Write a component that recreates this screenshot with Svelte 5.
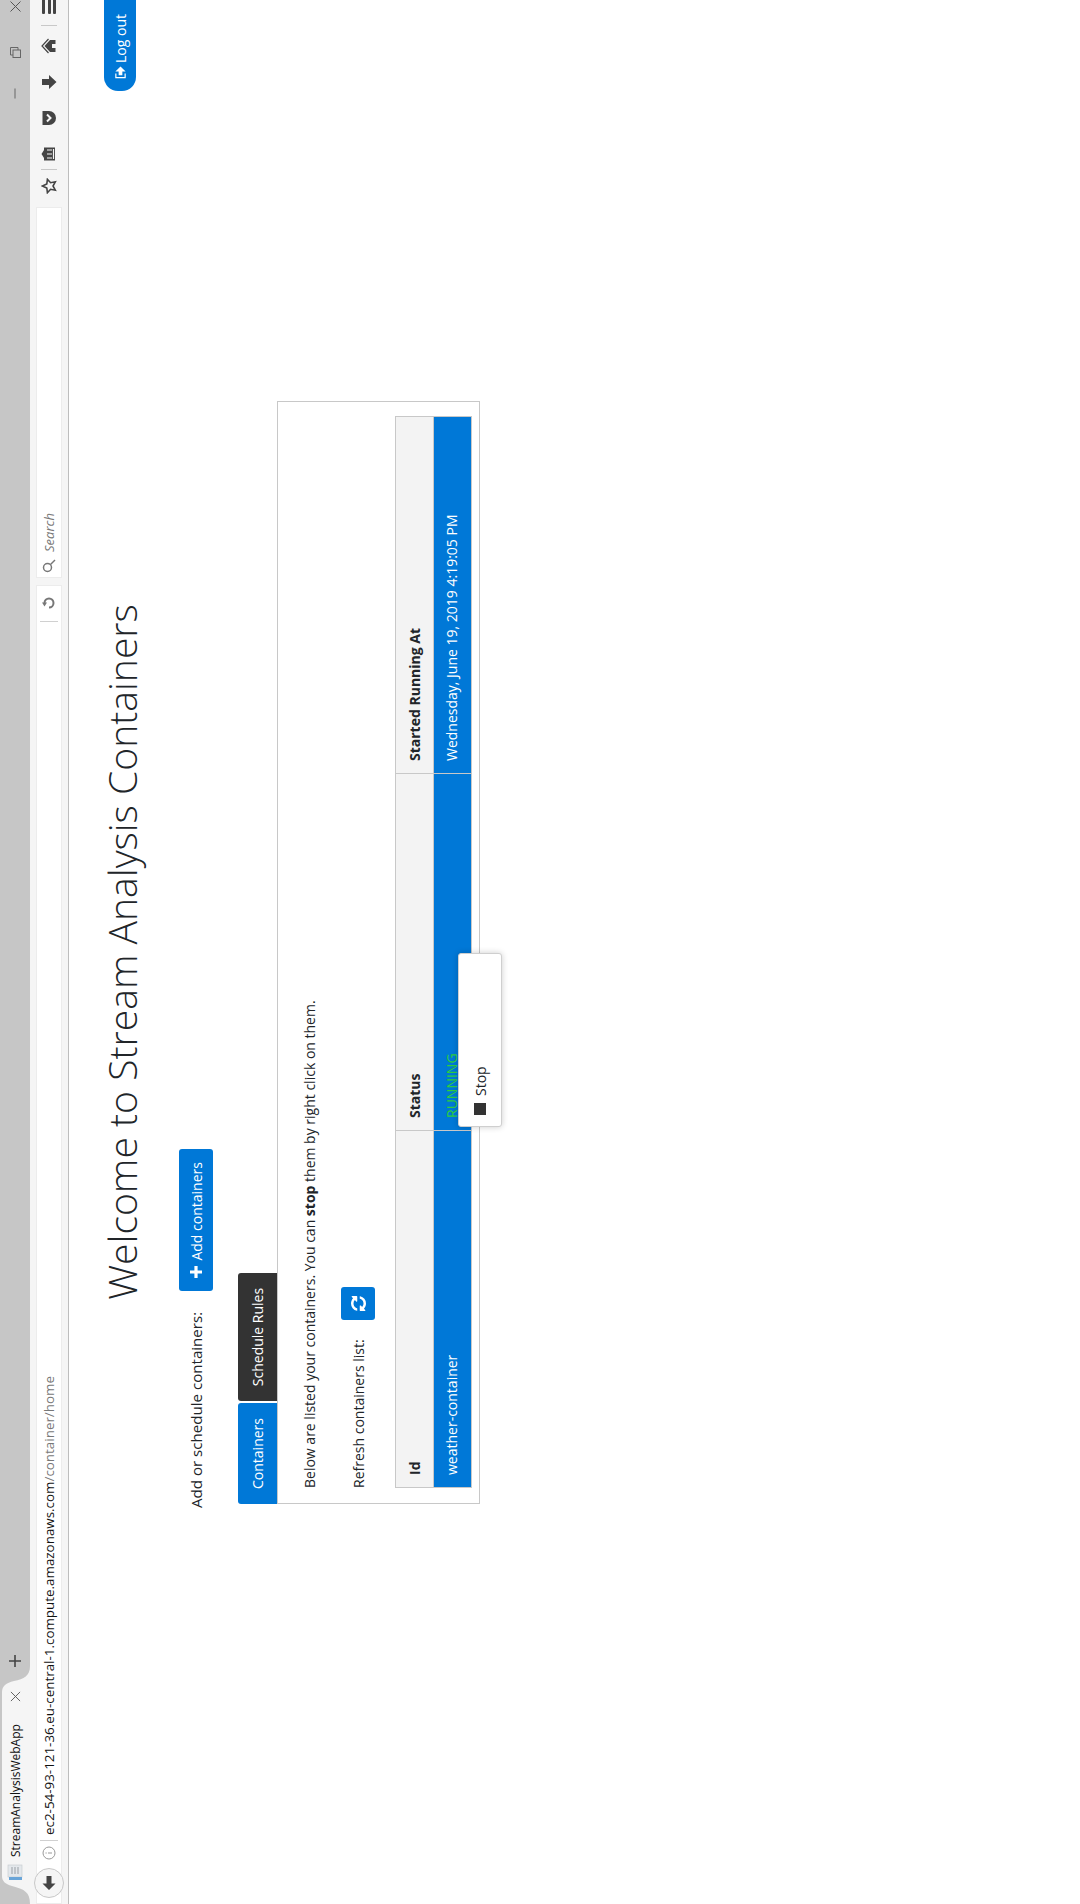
<script>
	const columns = ['Id', 'Status', 'Started Running At'];
</script>

<div class="viewport">
	<div class="stage">
		<div class="tabstrip">
			<div class="tab">
				<svg class="tab-shape" viewBox="0 0 238 30" width="238" height="30" aria-hidden="true">
					<path d="M0 30C12 30 15 24 18 12C20 5 23 2 28 2L212 2C218 2 221 6 223 14C225 24 228 30 238 30Z" fill="#f5f5f5" />
				</svg>
				<svg class="favicon" viewBox="0 0 16 16" width="16" height="16" aria-hidden="true">
					<rect x="3" y="1" width="12" height="14" fill="#e4e8ec" stroke="#c4c8cc" stroke-width=".6" />
					<rect x="0" y="2" width="3" height="13" fill="#6aa5d8" />
					<path d="M6 5h7M6 8h7M6 11h7" stroke="#9aa0a6" />
				</svg>
				<span class="tab-title">StreamAnalysisWebApp</span>
				<svg class="tab-close" viewBox="0 0 12 12" width="11" height="11" aria-hidden="true">
					<path d="M1 1l10 10M11 1L1 11" stroke="#555" stroke-width="1" fill="none" />
				</svg>
			</div>
			<svg class="new-tab" viewBox="0 0 12 12" width="12" height="12" aria-hidden="true">
				<path d="M6 0v12M0 6h12" stroke="#444" stroke-width="1.6" />
			</svg>
			<div class="window-controls">
				<span class="minimize"></span>
				<svg class="restore" viewBox="0 0 11 11" width="11" height="11" aria-hidden="true">
					<path d="M3 3V.5h7.500V8H8" fill="none" stroke="#666" />
					<rect x=".5" y="3" width="7.500" height="7.500" fill="none" stroke="#666" />
				</svg>
				<svg class="win-close" viewBox="0 0 11 11" width="11" height="11" aria-hidden="true">
					<path d="M.5.500l10 10M10.500.500l-10 10" stroke="#555" fill="none" />
				</svg>
			</div>
		</div>

		<div class="toolbar">
			<div class="urlbar">
				<span class="back">
					<svg viewBox="0 0 16 16" width="16" height="16" aria-hidden="true">
						<path d="M1 8l6.500-6.500V5.500H15v5H7.500v4z" fill="#444" />
					</svg>
				</span>
				<svg class="info" viewBox="0 0 14 14" width="14" height="14" aria-hidden="true">
					<circle cx="7" cy="7" r="6" fill="none" stroke="#999" />
					<path d="M7 6v4M7 3.500v1.200" stroke="#999" />
				</svg>
				<span class="vsep"></span>
				<span class="url">ec2-54-93-121-36.eu-central-1.compute.amazonaws.com<span class="url-path">/container/home</span></span>
				<span class="vsep reload-sep"></span>
				<svg class="reload" viewBox="0 0 14 14" width="14" height="14" aria-hidden="true">
					<path d="M2.500 7A4.500 4.500 0 1 0 7 2.500" fill="none" stroke="#777" stroke-width="2" />
					<path d="M7.500 0l-4 2.500 4 2.500z" fill="#777" />
				</svg>
			</div>
			<div class="searchbar">
				<svg viewBox="0 0 14 14" width="14" height="14" aria-hidden="true">
					<circle cx="5.500" cy="5.500" r="4" fill="none" stroke="#777" stroke-width="1.500" />
					<path d="M8.500 8.500L13 13" stroke="#777" stroke-width="1.500" />
				</svg>
				<span>Search</span>
			</div>
			<div class="tools">
				<svg viewBox="0 0 16 16" width="16" height="16" aria-hidden="true">
					<path d="M8 1.500l2 4.300 4.700.6-3.400 3.200.9 4.700L8 12l-4.200 2.300.9-4.700L1.300 6.400 6 5.800z" fill="none" stroke="#444" stroke-width="1.600" />
				</svg>
				<span class="vsep tool-sep"></span>
				<svg viewBox="0 0 16 16" width="16" height="16" aria-hidden="true">
					<path d="M8 .500L12 3H14.500V14H1.500V3H4z" fill="#444" />
					<path d="M4 6v5M8 6v5M12 6v5M3 12.500h10" stroke="#f5f5f5" stroke-width="1.200" />
				</svg>
				<svg viewBox="0 0 16 16" width="16" height="16" aria-hidden="true">
					<path d="M1 1.500h14V8A7 7 0 0 1 1 8z" fill="#444" />
					<path d="M4.500 6L8 9.500 11.500 6" fill="none" stroke="#f5f5f5" stroke-width="2" />
				</svg>
				<svg viewBox="0 0 16 16" width="16" height="16" aria-hidden="true">
					<path d="M5 1h6v7h4l-7 7.500L1 8h4z" fill="#444" />
				</svg>
				<svg viewBox="0 0 16 16" width="16" height="16" aria-hidden="true">
					<path d="M8 3.500L14 9v5.500H10V11H6v3.500H2V9z" fill="#444" />
					<path d="M1 7.500L8 1l7 6.500" fill="none" stroke="#444" stroke-width="1.200" />
				</svg>
				<span class="vsep tool-sep home-sep"></span>
				<span class="menu"><i></i><i></i><i></i></span>
			</div>
		</div>

		<main class="page">
			<header class="page-head">
				<h1>Welcome to Stream Analysis Containers</h1>
				<button class="logout">
					<svg viewBox="0 0 14 14" width="13" height="13" aria-hidden="true">
						<path d="M6 2H1.500v10H6" fill="none" stroke="#fff" stroke-width="1.300" />
						<path d="M13.500 7L8 1.500V5H4v4h4v3.500z" fill="#fff" />
					</svg>
					Log out
				</button>
			</header>

			<div class="add-row">
				<span class="add-label">Add or schedule containers:</span>
				<button class="btn">
					<svg viewBox="0 0 12 12" width="12" height="12" aria-hidden="true">
						<path d="M6 0v12M0 6h12" stroke="#fff" stroke-width="3.200" />
					</svg>
					Add containers
				</button>
			</div>

			<div class="panel">
				<div class="tabs">
					<span class="pill active">Containers</span>
					<span class="pill dark">Schedule Rules</span>
				</div>
				<section class="card">
					<p>Below are listed your containers. You can <b>stop</b> them by right click on them.</p>
					<div class="refresh-row">
						<span>Refresh containers list:</span>
						<button class="btn icon-btn" aria-label="Refresh">
							<svg viewBox="0 0 1536 1536" width="15" height="15" aria-hidden="true">
								<path d="M1511 928q0 5-1 7-64 268-268 434.500t-478 166.500q-146 0-282.500-55t-243.500-157l-129 129q-19 19-45 19t-45-19-19-45v-448q0-26 19-45t45-19h448q26 0 45 19t19 45-19 45l-137 137q71 66 161 102t187 36q134 0 250-65t186-179q11-17 53-117 8-23 30-23h192q13 0 22.500 9.500t9.500 22.500zm25-800v448q0 26-19 45t-45 19h-448q-26 0-45-19t-19-45 19-45l138-138q-148-137-349-137-134 0-250 65t-186 179q-11 17-53 117-8 23-30 23h-199q-13 0-22.500-9.500t-9.500-22.500v-7q65-268 270-434.500t480-166.500q146 0 284 55.500t245 156.500l130-129q19-19 45-19t45 19 19 45z" fill="#fff" />
							</svg>
						</button>
					</div>
					<table>
						<thead>
							<tr>
								{#each columns as column (column)}
									<th>{column}</th>
								{/each}
							</tr>
						</thead>
						<tbody>
							<tr class="selected">
								<td>weather-container</td>
								<td class="running">RUNNING</td>
								<td>Wednesday, June 19, 2019 4:19:05 PM</td>
							</tr>
						</tbody>
					</table>
				</section>
				<div class="context-menu">
					<span class="stop-square"></span>
					<span>Stop</span>
				</div>
			</div>
		</main>
	</div>
</div>

<style>
	:global(html),
	:global(body) {
		margin: 0;
		background: #fff;
		overflow: hidden;
	}

	.viewport {
		width: 1080px;
		height: 1904px;
		overflow: hidden;
	}

	/* the whole capture lies on its side: laid out landscape, then turned */
	.stage {
		width: 1904px;
		height: 1080px;
		transform-origin: 0 0;
		transform: translateY(1904px) rotate(-90deg);
		display: flex;
		flex-direction: column;
		font-family: "Open Sans", sans-serif;
		font-size: 14px;
		color: #212529;
		background: #fff;
	}

	.tabstrip {
		height: 30px;
		flex: none;
		background: #c6c6c6;
		display: flex;
		align-items: center;
		position: relative;
	}

	.tab {
		width: 238px;
		height: 30px;
		flex: none;
		position: relative;
		display: flex;
		align-items: center;
	}

	.tab-shape {
		position: absolute;
		inset: 0;
	}

	.favicon,
	.tab-title,
	.tab-close {
		position: relative;
	}

	.favicon {
		margin-left: 24px;
	}

	.tab-title {
		margin-left: 7px;
		width: 125px;
		font-size: 12px;
		color: #111;
		white-space: nowrap;
	}

	.tab-close {
		margin-left: 30px;
	}

	.new-tab {
		margin-left: -1px;
	}

	.window-controls {
		margin-left: auto;
		display: flex;
		align-items: center;
		gap: 35px;
		padding-right: 1px;
	}

	.minimize {
		width: 1px;
		height: 10px;
		background: #666;
		transform: rotate(90deg);
	}

	.toolbar {
		height: 38px;
		flex: none;
		box-sizing: content-box;
		background: #f5f5f5;
		border-bottom: 1px solid #bdbdbd;
		display: flex;
		align-items: center;
	}

	.urlbar {
		width: 1319px;
		height: 26px;
		flex: none;
		background: #fff;
		box-shadow: inset 0 0 0 1px #ececec;
		display: flex;
		align-items: center;
		position: relative;
	}

	.back {
		position: absolute;
		left: 6px;
		top: -2px;
		width: 30px;
		height: 30px;
		box-sizing: border-box;
		border: 1px solid #c8c8c8;
		border-radius: 50%;
		background: #f5f5f5;
		display: flex;
		align-items: center;
		justify-content: center;
	}

	.info {
		margin-left: 44px;
		flex: none;
	}

	.vsep {
		width: 1px;
		height: 18px;
		background: #d0d0d0;
		flex: none;
	}

	.urlbar .vsep:not(.reload-sep) {
		margin-left: 5px;
	}

	.url {
		margin-left: 5px;
		font-size: 13.400px;
		color: #111;
		white-space: nowrap;
	}

	.url-path {
		color: #777;
	}

	.reload-sep {
		margin-left: auto;
	}

	.reload {
		margin: 0 11px;
		flex: none;
	}

	.searchbar {
		width: 371px;
		height: 26px;
		margin-left: 7px;
		flex: none;
		background: #fff;
		box-shadow: inset 0 0 0 1px #ececec;
		display: flex;
		align-items: center;
		gap: 7px;
		padding-left: 5px;
		box-sizing: border-box;
		font-size: 13px;
		font-style: italic;
		color: #777;
	}

	.tools {
		margin-left: 13px;
		flex: 1;
		display: flex;
		align-items: center;
		gap: 20px;
		overflow: hidden;
		height: 38px;
	}

	.tools svg {
		flex: none;
	}

	.tool-sep {
		margin: 0 -13px 0 -12px;
		width: 1px;
		height: 16px;
		background: #c8c8c8;
	}

	.home-sep {
		margin: 0 -8px;
	}

	.menu {
		display: grid;
		gap: 2.500px;
		width: 20px;
		flex: none;
		margin-left: -1px;
	}

	.menu i {
		height: 3px;
		background: #444;
		border-radius: 1px;
	}

	.page {
		flex: 1;
		min-height: 0;
	}

	.page-head {
		height: 54px;
		margin-top: 26px;
		display: grid;
		grid-template-columns: 1fr auto 1fr;
	}

	h1 {
		grid-column: 2;
		margin: 0;
		font-size: 39.100px;
		font-weight: 300;
		line-height: 54px;
		color: #212529;
		white-space: nowrap;
	}

	button {
		font-family: inherit;
		font-size: 14px;
		color: #fff;
		background: #0078d7;
		border: 0;
		padding: 0;
	}

	.logout {
		grid-column: 3;
		justify-self: end;
		margin-top: 9px;
		height: 32px;
		width: 91px;
		border-radius: 14px 0 0 14px;
		display: flex;
		align-items: center;
		gap: 3px;
		padding-left: 12px;
		box-sizing: border-box;
		white-space: nowrap;
	}

	.add-row {
		margin-top: 30px;
		margin-left: 396px;
		display: flex;
		align-items: center;
		gap: 21px;
		height: 34px;
	}

	.add-label {
		font-size: 15.100px;
	}

	.btn {
		height: 34px;
		border-radius: 3px;
		display: inline-flex;
		align-items: center;
		justify-content: center;
	}

	.add-row .btn {
		width: 142px;
		gap: 5px;
		font-size: 14px;
	}

	.panel {
		position: relative;
		margin-top: 25px;
		margin-left: 400px;
		width: 1103px;
	}

	.tabs {
		display: flex;
		gap: 2px;
		height: 39px;
	}

	.pill {
		height: 39px;
		display: flex;
		align-items: center;
		justify-content: center;
		color: #fff;
		border-radius: 3px 3px 0 0;
		line-height: 1;
	}

	.pill.active {
		width: 101px;
		background: #0078d7;
	}

	.pill.dark {
		width: 128px;
		background: #333;
	}

	.card {
		box-sizing: border-box;
		height: 203px;
		border: 1px solid #c8c8c8;
		padding: 22px 14px 0 15px;
	}

	.card p {
		margin: 0;
		line-height: 20px;
		height: 20px;
		white-space: nowrap;
	}

	.refresh-row {
		margin-top: 21px;
		height: 34px;
		display: flex;
		align-items: center;
		gap: 19px;
	}

	.icon-btn {
		width: 33px;
	}

	table {
		margin-top: 20px;
		width: 100%;
		table-layout: fixed;
		border-collapse: collapse;
	}

	th,
	td {
		height: 38px;
		box-sizing: border-box;
		padding: 0 12px;
		text-align: left;
		border: 1px solid #c8c8c8;
		font-size: 14px;
		line-height: 20px;
	}

	th {
		background: #f3f3f3;
		font-weight: 700;
	}

	.selected td {
		background: #0078d7;
		color: #fff;
		padding-bottom: 2px;
	}

	.selected td.running {
		color: #2ecc40;
	}

	.context-menu {
		position: absolute;
		left: 377px;
		top: 220px;
		width: 174px;
		height: 44px;
		box-sizing: border-box;
		background: #fff;
		border: 1px solid #cfcfcf;
		border-radius: 3px;
		box-shadow: 0 0 6px rgba(0, 0, 0, 0.2);
		display: flex;
		align-items: center;
		gap: 7px;
		padding-left: 11px;
		font-size: 14px;
	}

	.stop-square {
		width: 12px;
		height: 12px;
		background: #333;
	}
</style>
